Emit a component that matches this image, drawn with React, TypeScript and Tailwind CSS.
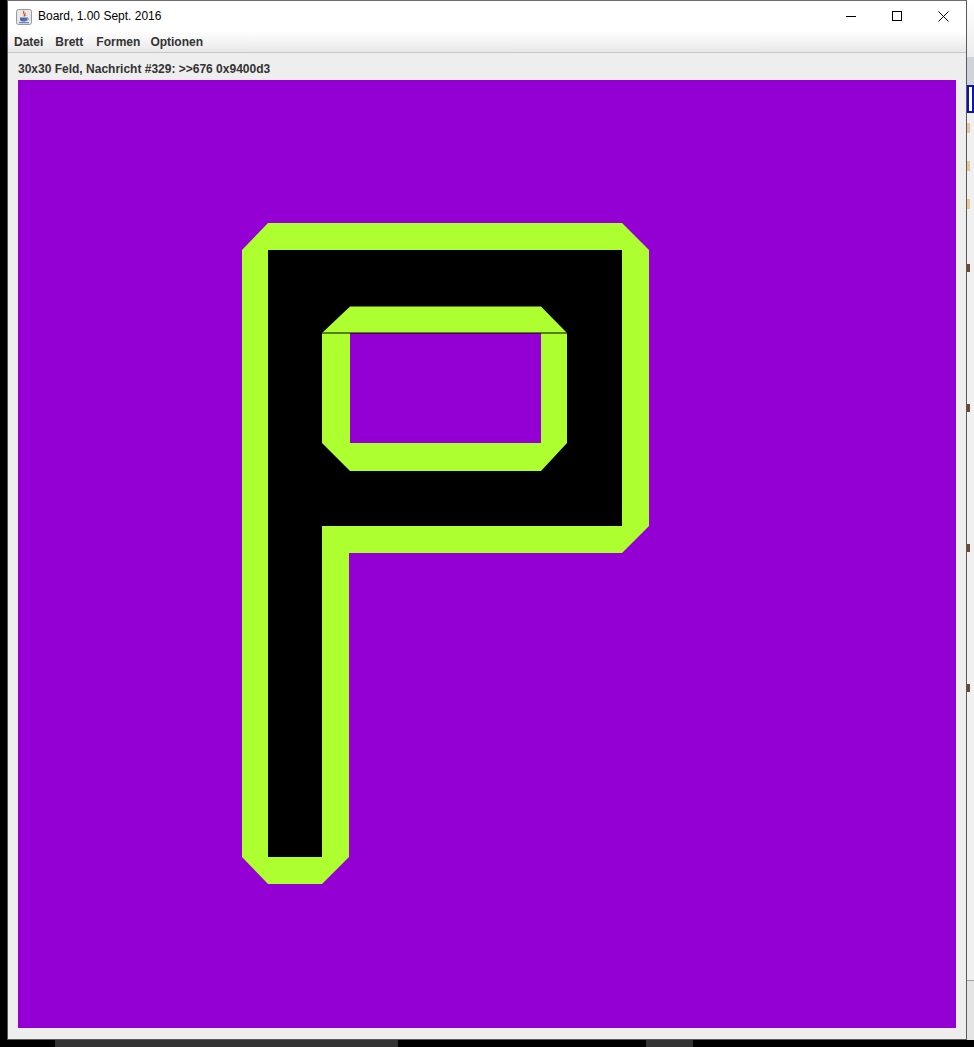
const JavaIcon = () => (
  <svg width="16" height="16" viewBox="0 0 16 16">
    <rect x="0.5" y="0.5" width="15" height="15" rx="2" fill="#e8e8e8" stroke="#9a9a9a" />
    <path d="M8 2 C6 4, 10 5, 8 7.5" stroke="#e0401a" strokeWidth="1.2" fill="none" />
    <path d="M9.5 3.5 C8.5 5, 10.5 5.5, 9.5 7" stroke="#f08020" strokeWidth="1" fill="none" />
    <path d="M4 8.5 H11 V10.5 C11 12, 9.5 12.5, 7.5 12.5 C5.5 12.5, 4 12, 4 10.5 Z" fill="#4a6fb0" />
    <path d="M11 9 C13 9, 13 11, 10.5 11.3" stroke="#4a6fb0" strokeWidth="0.9" fill="none" />
    <rect x="3" y="13.2" width="10" height="1" fill="#4a6fb0" />
  </svg>
);

const Board = () => (
  <svg width="938" height="948" viewBox="0 0 938 948" className="block">
    <rect width="938" height="948" fill="#9400d3" />
    <polygon
      points="250,143 604,143 631,170 631,446 604,473 331,473 331,777 304,804 250,804 224,777 224,170"
      fill="#adff2f"
    />
    <polygon points="250,170 604,170 604,446 304,446 304,777 250,777" fill="#000000" />
    <polygon
      points="332,226.5 523,226.5 549,253 549,363 523,391 332,391 304,363 304,253"
      fill="#adff2f"
    />
    <rect x="332" y="253" width="191" height="110" fill="#9400d3" />
    <rect x="304" y="252.5" width="245" height="1" fill="#000000" />
  </svg>
);

export default function App() {
  const font = { fontFamily: '"Liberation Sans", Arial, sans-serif' };
  return (
    <div className="w-[974px] h-[1047px] bg-black flex flex-col overflow-hidden">
      <div className="flex h-[1040px]">
        <div className="w-[7px] bg-black" />

        {/* window */}
        <div className="w-[960px] border border-[#5a5a5a] border-t-[#6e6e6e] flex flex-col bg-[#eeeeee]">
          {/* title bar */}
          <div className="h-[30px] bg-white flex items-center relative">
            <div className="ml-[8px] mt-[1px]">
              <JavaIcon />
            </div>
            <span className="ml-[6px] text-[12px] text-black" style={font}>
              Board, 1.00 Sept. 2016
            </span>
            <div className="ml-auto flex items-center h-full">
              <div className="w-[46px] h-full flex items-center justify-center">
                <div className="w-[10px] h-px bg-black" />
              </div>
              <div className="w-[46px] h-full flex items-center justify-center">
                <div className="w-[10px] h-[10px] border border-black" />
              </div>
              <div className="w-[46px] h-full flex items-center justify-center">
                <svg width="11" height="11" viewBox="0 0 11 11">
                  <path d="M0.5 0.5 L10.5 10.5 M10.5 0.5 L0.5 10.5" stroke="#000" strokeWidth="1" />
                </svg>
              </div>
            </div>
          </div>

          {/* menu bar */}
          <div
            className="h-[22px] bg-gradient-to-b from-white to-[#e8e8e8] border-b border-[#c8c8c8] flex items-center pl-[6px] gap-[12px] text-[12px] font-bold text-[#333333]"
            style={font}
          >
            <span>Datei</span>
            <span>Brett</span>
            <span className="ml-[1px]">Formen</span>
            <span className="-ml-[2px]">Optionen</span>
          </div>

          {/* content */}
          <div className="flex-1 px-[10px] pt-[6px]">
            <div className="h-[21px] text-[12px] font-bold text-[#333333] leading-[21px]" style={font}>
              30x30 Feld, Nachricht #329: &gt;&gt;676 0x9400d3
            </div>
            <Board />
          </div>
        </div>

        {/* background window peeking on the right */}
        <div className="w-[7px] flex flex-col bg-[#f0f0f0]">
          <div className="h-[57px] bg-gradient-to-b from-white to-[#ececec]" />
          <div className="h-[28px] bg-[#cfd4da]" />
          <div className="h-[28px] border-2 border-[#0a14b8] bg-white" />
          <div className="h-[10px]" />
          <div className="h-[10px] w-[3px] bg-[#e8c89a]" />
          <div className="h-[28px]" />
          <div className="h-[10px] w-[3px] bg-[#e8c89a]" />
          <div className="h-[28px]" />
          <div className="h-[10px] w-[3px] bg-[#e8c89a]" />
          <div className="h-[55px]" />
          <div className="h-[8px] w-[3px] bg-[#6b4a3a]" />
          <div className="h-[132px]" />
          <div className="h-[8px] w-[3px] bg-[#6b4a3a]" />
          <div className="h-[132px]" />
          <div className="h-[8px] w-[3px] bg-[#6b4a3a]" />
          <div className="h-[132px]" />
          <div className="h-[8px] w-[3px] bg-[#6b4a3a]" />
          <div className="flex-1" />
          <div className="h-[60px] border-t border-[#a0a0a0] bg-[#e4e4e4]" />
        </div>
      </div>

      {/* taskbar remnants */}
      <div className="flex-1 flex">
        <div className="w-[55px]" />
        <div className="w-[343px] bg-[#333333]" />
        <div className="w-[248px]" />
        <div className="w-[47px] bg-[#333333]" />
      </div>
    </div>
  );
}
